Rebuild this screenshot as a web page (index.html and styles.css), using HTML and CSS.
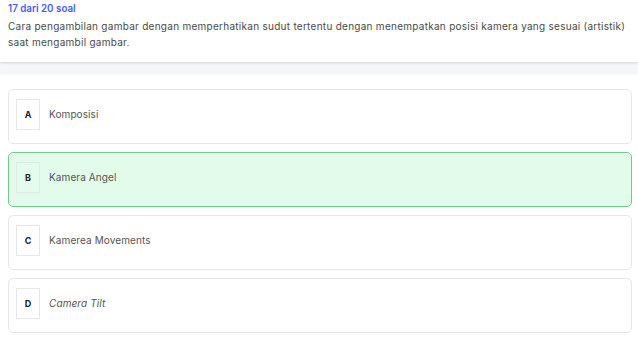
FILE: index.html
```html
<!DOCTYPE html>
<html lang="id">
<head>
<meta charset="utf-8">
<link rel="stylesheet" href="styles.css">
</head>
<body>
<header class="head">
  <div class="count">17 dari 20 soal</div>
  <p class="question">Cara pengambilan gambar dengan memperhatikan sudut tertentu dengan menempatkan posisi kamera yang sesuai (artistik) saat mengambil gambar.</p>
</header>
<main class="options">
  <div class="opt"><span class="key">A</span><span class="label">Komposisi</span></div>
  <div class="opt opt-selected"><span class="key">B</span><span class="label">Kamera Angel</span></div>
  <div class="opt"><span class="key">C</span><span class="label">Kamerea Movements</span></div>
  <div class="opt"><span class="key">D</span><span class="label label-italic">Camera Tilt</span></div>
</main>
</body>
</html>
```
FILE: styles.css
```css
html, body { margin: 0; padding: 0; }
body {
  width: 638px;
  height: 342px;
  overflow: hidden;
  background: #fff;
  font-family: "Inter", "Open Sans", sans-serif;
  color: #444;
}
.head {
  background: #fff;
  padding: 2px 4px 0 8px;
  height: 60px;
  box-shadow: 0 1px 3px rgba(0,0,0,0.14);
  position: relative;
  z-index: 1;
}
.count {
  color: #3f5ff0;
  font-weight: 600;
  font-size: 9.8px;
  line-height: 14px;
}
.question {
  margin: 2px 0 0;
  font-size: 10px;
  line-height: 16px;
  color: #4a4a4a;
  letter-spacing: 0.27px;
}
.options {
  background: linear-gradient(#f5f6f8 0, #f5f6f8 12px, #fff 14px);
  padding: 27px 6px 0 8px;
  display: flex;
  flex-direction: column;
  gap: 8px;
}
.opt {
  height: 53px;
  border: 1px solid #e6e7e9;
  border-radius: 5px;
  background: #fff;
  display: flex;
  align-items: center;
  padding: 0 7px;
  gap: 9px;
}
.opt-selected {
  background: #e3fbea;
  border-color: #6fd08e;
}
.key {
  width: 22px;
  height: 29px;
  border: 1px solid #e6e7e9;
  display: flex;
  align-items: center;
  justify-content: center;
  font-size: 9px;
  font-weight: 700;
  color: #222;
  margin-top: -5px;
}
.label {
  font-size: 10px;
  color: #555;
  margin-top: -6px;
  letter-spacing: 0.1px;
}
.label-italic { font-style: italic; }
```
